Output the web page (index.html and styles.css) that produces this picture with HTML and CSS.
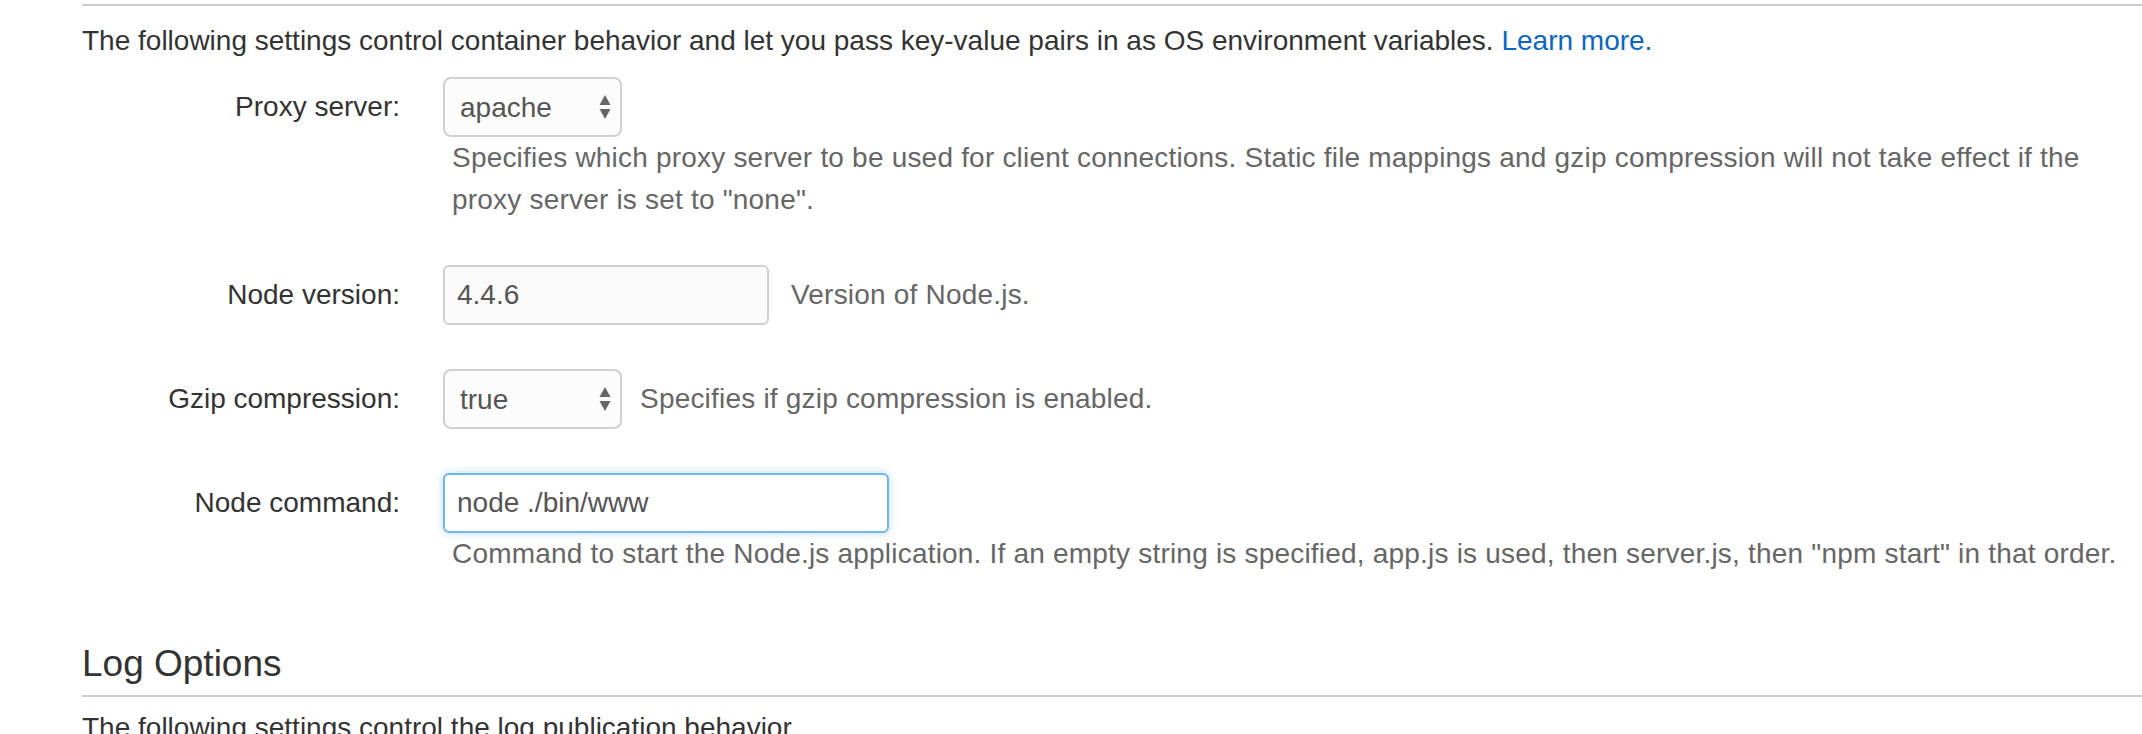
FILE: index.html
```html
<!DOCTYPE html>
<html lang="en">
<head>
<meta charset="utf-8">
<title>Container Options</title>
<link rel="stylesheet" href="styles.css">
</head>
<body>
<div class="page">
  <div class="rule rule-top"></div>
  <p class="intro">The following settings control container behavior and let you pass key-value pairs in as OS environment variables. <a href="#" class="link">Learn more.</a></p>

  <div class="form">
    <div class="group">
      <label class="label" for="proxy">Proxy server:</label>
      <div class="control">
        <div class="line">
          <span class="select-wrap select-sm">
            <select id="proxy" class="select"><option>apache</option><option>nginx</option><option>none</option></select>
            <svg class="arrows" width="12" height="26" viewBox="0 0 12 26"><path d="M6 1 L11.5 11 H0.5 Z" fill="#666"/><path d="M6 25 L11.5 15 H0.5 Z" fill="#666"/></svg>
          </span>
        </div>
        <p class="help help-block">Specifies which proxy server to be used for client connections. Static file mappings and gzip compression will not take effect if the proxy server is set to "none".</p>
      </div>
    </div>

    <div class="group">
      <label class="label" for="nodever">Node version:</label>
      <div class="control">
        <div class="line">
          <input id="nodever" class="input input-md" type="text" value="4.4.6">
          <span class="help help-inline help-inline-wide">Version of Node.js.</span>
        </div>
      </div>
    </div>

    <div class="group">
      <label class="label" for="gzip">Gzip compression:</label>
      <div class="control">
        <div class="line">
          <span class="select-wrap select-sm">
            <select id="gzip" class="select"><option>true</option><option>false</option></select>
            <svg class="arrows" width="12" height="26" viewBox="0 0 12 26"><path d="M6 1 L11.5 11 H0.5 Z" fill="#666"/><path d="M6 25 L11.5 15 H0.5 Z" fill="#666"/></svg>
          </span>
          <span class="help help-inline">Specifies if gzip compression is enabled.</span>
        </div>
      </div>
    </div>

    <div class="group">
      <label class="label" for="nodecmd">Node command:</label>
      <div class="control">
        <div class="line">
          <input id="nodecmd" class="input input-lg input-focus" type="text" value="node ./bin/www">
        </div>
        <p class="help help-block">Command to start the Node.js application. If an empty string is specified, app.js is used, then server.js, then "npm start" in that order.</p>
      </div>
    </div>
  </div>

  <h2 class="heading">Log Options</h2>
  <div class="rule"></div>
  <p class="intro intro-log">The following settings control the log publication behavior.</p>
</div>
</body>
</html>
```

FILE: styles.css
```css
* { box-sizing: border-box; }

html, body {
  margin: 0;
  padding: 0;
  background: #ffffff;
}

body {
  font-family: "Liberation Sans", Arial, sans-serif;
  font-size: 28px;
  color: #333333;
}

.page {
  padding: 4px 0 0 82px;
  overflow: hidden;
  height: 734px;
}

.rule {
  height: 2px;
  background: #cccccc;
}

.intro {
  margin: 14px 0 15px;
  line-height: 42px;
  color: #333333;
}

.link {
  color: #0b66c3;
  text-decoration: none;
}

.form {
  display: flex;
  flex-direction: column;
  gap: 44px;
}

.group {
  display: grid;
  grid-template-columns: 318px 1fr;
  column-gap: 43px;
  align-items: start;
}

.label {
  height: 60px;
  display: flex;
  align-items: center;
  justify-content: flex-end;
  color: #333333;
}

.control {
  display: flex;
  flex-direction: column;
}

.line {
  display: flex;
  align-items: center;
  height: 60px;
}

.select-wrap {
  position: relative;
  display: inline-block;
  height: 60px;
}

.select-sm { width: 179px; }

.select {
  appearance: none;
  -webkit-appearance: none;
  width: 100%;
  height: 60px;
  border: 2px solid #d0d0d0;
  border-radius: 8px;
  background: #fcfcfc;
  font-family: inherit;
  font-size: 28px;
  color: #555555;
  padding: 0 0 0 15px;
  margin: 0;
  outline: none;
}

.arrows {
  position: absolute;
  right: 11px;
  top: 17px;
}

.input {
  height: 60px;
  border: 2px solid #d0d0d0;
  border-radius: 6px;
  background: #fafafa;
  font-family: inherit;
  font-size: 28px;
  color: #555555;
  padding: 0 12px;
  margin: 0;
  outline: none;
}

.input-md { width: 326px; }
.input-lg { width: 446px; }

.input-focus {
  background: #ffffff;
  border-color: #72b4ec;
  box-shadow: 0 0 8px rgba(102, 175, 233, 0.45);
}

.help {
  color: #666666;
  line-height: 42px;
  letter-spacing: 0.2px;
}

.help-block {
  margin: 0;
  padding-left: 9px;
  padding-right: 20px;
}

.help-inline {
  margin-left: 18px;
}

.help-inline-wide {
  margin-left: 22px;
}

.heading {
  margin: 69px 0 0;
  font-weight: normal;
  font-size: 37px;
  line-height: 40px;
  padding-bottom: 11px;
  color: #333333;
}

.intro-log {
  margin-top: 10px;
}
```
